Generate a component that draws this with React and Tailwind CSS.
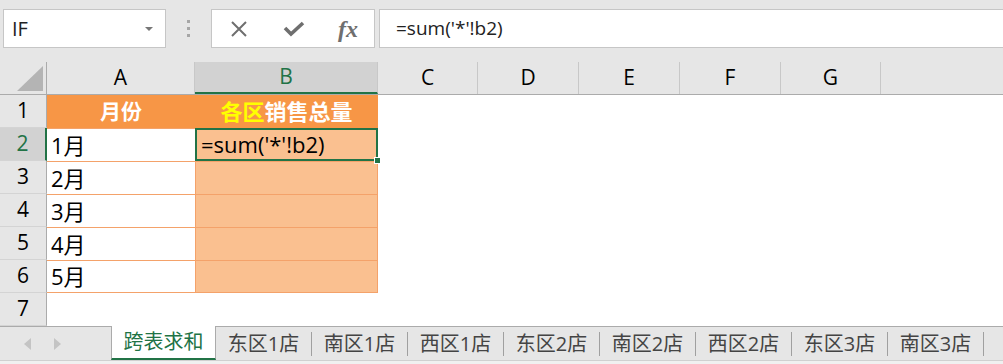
import React from "react";

// ─── Ícones da barra de fórmulas ─────────────────────────────────────────────

function CancelIcon() {
  return (
    <svg width="18" height="18" viewBox="0 0 18 18" aria-hidden="true">
      <path d="M2 2L16 16M16 2L2 16" stroke="#6f6f6f" strokeWidth="2" fill="none" />
    </svg>
  );
}

function CheckIcon() {
  return (
    <svg width="22" height="18" viewBox="0 0 22 18" aria-hidden="true">
      <path d="M2 8L8 14L20 3" stroke="#6f6f6f" strokeWidth="3.6" fill="none" strokeLinejoin="miter" />
    </svg>
  );
}

function CornerTriangle() {
  return (
    <svg width="26" height="25" viewBox="0 0 26 25" aria-hidden="true">
      <polygon points="26,0 26,25 0,25" fill="#b4b4b4" />
    </svg>
  );
}

const FONT = { fontFamily: "'Open Sans', 'Noto Sans CJK SC', sans-serif" };

const COLS = [
  { key: "A", w: "w-[148px]" },
  { key: "B", w: "w-[183px]" },
  { key: "C", w: "w-[100px]" },
  { key: "D", w: "w-[101px]" },
  { key: "E", w: "w-[101px]" },
  { key: "F", w: "w-[101px]" },
  { key: "G", w: "w-[100px]" },
];

const MONTHS = ["1月", "2月", "3月", "4月", "5月"];
const TABS = ["东区1店", "南区1店", "西区1店", "东区2店", "南区2店", "西区2店", "东区3店", "南区3店"];

function RowHead({ n, active }) {
  return (
    <div
      className={`w-[47px] shrink-0 h-full flex items-center justify-center text-[21px] border-r ${
        active ? "bg-[#d2d2d2] text-[#217346] border-r-2 border-[#217346]" : "bg-[#e6e6e6] text-black border-[#ababab]"
      } border-b border-b-[#d4d4d4]`}
    >
      {n}
    </div>
  );
}

export default function App() {
  return (
    <div className="w-[1003px] h-[364px] overflow-hidden bg-white flex flex-col" style={FONT}>
      {/* ── Barra de nome e fórmula ─────────────────────────────── */}
      <div className="h-[62px] shrink-0 bg-[#e6e6e6] flex items-start pt-[9px]">
        <div className="ml-[3px] w-[163px] h-[39px] bg-white border border-[#c6c6c6] flex items-center pl-[8px] pr-[12px]">
          <span className="text-[20px] text-[#222] flex-1">IF</span>
          <span className="w-0 h-0 border-l-[4px] border-r-[4px] border-t-[4px] border-l-transparent border-r-transparent border-t-[#777]" />
        </div>
        <div className="w-[45px] h-[39px] flex flex-col items-center justify-center gap-[4px]">
          <span className="w-[3px] h-[3px] bg-[#a6a6a6]" />
          <span className="w-[3px] h-[3px] bg-[#a6a6a6]" />
          <span className="w-[3px] h-[3px] bg-[#a6a6a6]" />
        </div>
        <div className="w-[164px] h-[39px] bg-white border border-[#c6c6c6] flex items-center">
          <div className="w-[54px] flex justify-center"><CancelIcon /></div>
          <div className="w-[56px] flex justify-center"><CheckIcon /></div>
          <div className="w-[52px] flex justify-center">
            <span className="text-[24px] italic font-bold text-[#6f6f6f]" style={{ fontFamily: "'Liberation Serif', serif" }}>fx</span>
          </div>
        </div>
        <div className="ml-[4px] flex-1 h-[39px] bg-white border border-r-0 border-[#c6c6c6] flex items-center pl-[16px]">
          <span className="text-[19px] text-[#222]">=sum('*'!b2)</span>
        </div>
      </div>

      {/* ── Cabeçalho das colunas ─────────────────────────────── */}
      <div className="h-[33px] shrink-0 flex bg-[#e6e6e6] border-b border-[#ababab]">
        <div className="w-[47px] shrink-0 border-r border-[#ababab] flex items-end justify-end pr-[3px] pb-[3px] pt-[5px]">
          <CornerTriangle />
        </div>
        {COLS.map((c) => (
          <div
            key={c.key}
            className={`${c.w} shrink-0 flex items-center justify-center text-[21px] border-r border-[#c8c8c8] ${
              c.key === "B" ? "bg-[#d2d2d2] text-[#217346] border-b-2 border-b-[#217346]" : "text-black"
            }`}
          >
            {c.key}
          </div>
        ))}
        <div className="flex-1" />
      </div>

      {/* ── Linhas ─────────────────────────────── */}
      <div className="flex flex-col">
        <div className="h-[33px] flex">
          <RowHead n="1" />
          <div className="w-[148px] shrink-0 bg-[#f79646] flex items-center justify-center text-white font-bold text-[21px]">月份</div>
          <div className="w-[183px] shrink-0 bg-[#f79646] flex items-center justify-center font-bold text-[22px]">
            <span className="text-[#ffff00]">各区</span>
            <span className="text-white">销售总量</span>
          </div>
        </div>
        {MONTHS.map((m, i) => (
          <div key={m} className="h-[33px] flex">
            <RowHead n={i + 2} active={i === 0} />
            <div className={`w-[148px] shrink-0 flex items-center pl-[4px] text-[22px] text-black border-t border-[#f4a26a] ${i === 4 ? "border-b" : ""}`}>
              {m}
            </div>
            {i === 0 ? (
              <div className="relative w-[183px] shrink-0 bg-[#fac090] border-2 border-[#217346] flex items-center pl-[4px] text-[22px] text-black">
                =sum('*'!b2)
                <span className="absolute right-[-5px] bottom-[-5px] w-[7px] h-[7px] bg-[#217346] border border-white" />
              </div>
            ) : (
              <div className={`w-[183px] shrink-0 bg-[#fac090] border-x border-t border-[#f4a26a] ${i === 4 ? "border-b" : ""}`} />
            )}
          </div>
        ))}
        <div className="h-[33px] flex">
          <RowHead n="7" />
        </div>
      </div>

      {/* ── Abas de planilhas ─────────────────────────────── */}
      <div className="h-[34px] shrink-0 bg-[#e6e6e6] border-t border-[#ababab] flex items-stretch">
        <div className="w-[111px] shrink-0 flex items-center pl-[24px] gap-[23px]">
          <span className="w-0 h-0 border-t-[6px] border-b-[6px] border-r-[7px] border-t-transparent border-b-transparent border-r-[#c4c4c4]" />
          <span className="w-0 h-0 border-t-[6px] border-b-[6px] border-l-[7px] border-t-transparent border-b-transparent border-l-[#c4c4c4]" />
        </div>
        <div className="w-[105px] shrink-0 bg-white border-x border-[#ababab] border-b-2 border-b-[#217346] mt-[-1px] flex items-center justify-center text-[20px] text-[#217346]">
          跨表求和
        </div>
        {TABS.map((t) => (
          <div key={t} className="w-[96px] shrink-0 flex items-center">
            <span className="flex-1 text-center text-[20px] text-[#444]">{t}</span>
            <span className="w-px h-[24px] bg-[#a0a0a0]" />
          </div>
        ))}
      </div>
      <div className="flex-1 bg-[#f0f0f0] border-t border-[#d0d0d0]" />
    </div>
  );
}
